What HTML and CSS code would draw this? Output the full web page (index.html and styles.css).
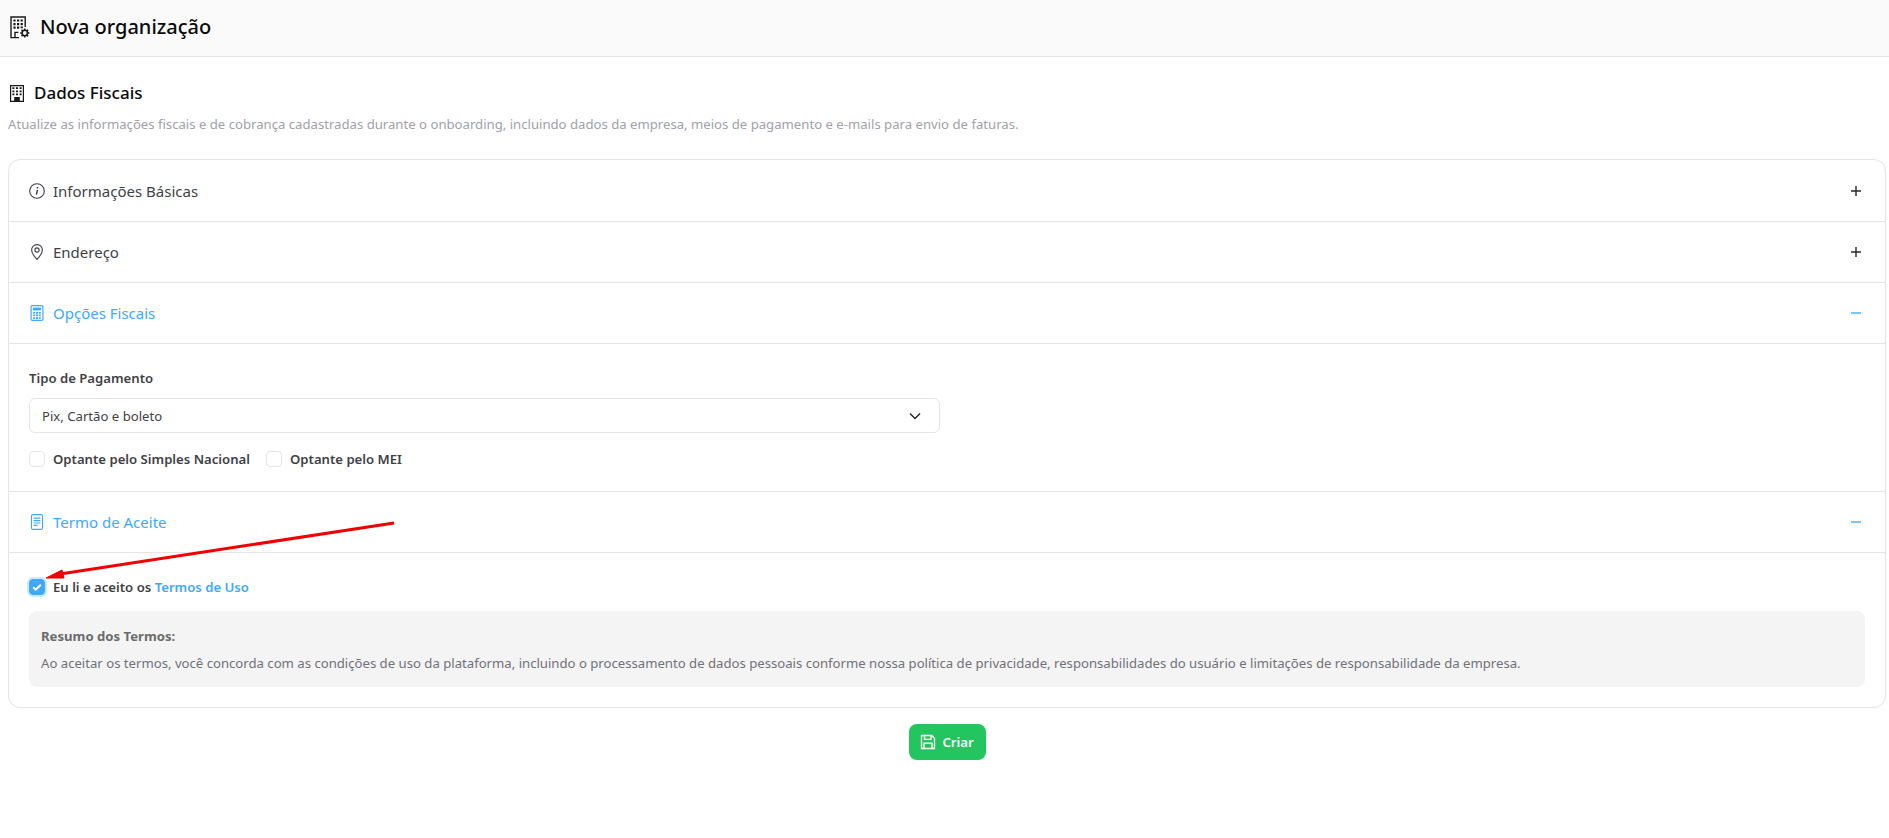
FILE: index.html
```html
<!DOCTYPE html>
<html lang="pt-BR">
<head>
<meta charset="utf-8">
<title>Nova organização</title>
<link rel="stylesheet" href="styles.css">
</head>
<body>
<header class="topbar">
  <svg class="top-icon" viewBox="0 0 20 23" fill="none" stroke="currentColor" stroke-width="1.4"><path d="M9 21.6H1V1h14.2v10"/><path fill="currentColor" stroke="none" d="M3.4 3.4h2.2v2.2H3.4zM7 3.4h2.2v2.2H7zM10.6 3.4h2.2v2.2h-2.2zM3.4 7h2.2v2.2H3.4zM7 7h2.2v2.2H7zM10.6 7h2.2v2.2h-2.2zM3.4 10.6h2.2v2.2H3.4zM7 10.6h2.2v2.2H7zM10.6 10.6h2.2v1.6h-2.2z"/><path d="M5 21.6v-5.2h3.4" /><circle cx="14.8" cy="17" r="2.7" stroke-width="1.6"/><path d="M14.8 12.4v1.6M14.8 20v1.6M10.2 17h1.6M17.8 17h1.6M11.5 13.7l1.2 1.2M16.9 19.1l1.2 1.2M11.5 20.3l1.2-1.2M16.9 14.9l1.2-1.2" stroke-width="1.5"/></svg>
  <h1 class="top-title">Nova organização</h1>
</header>
<main class="page">
  <div class="section-head">
    <svg class="section-icon" viewBox="0 0 14 17"><path fill="none" stroke="currentColor" stroke-width="1.2" d="M.6.6h12.8v15.8H.6z"/><path fill="currentColor" d="M2.4 2.3h2v1.8h-2zM6 2.3h2v1.8H6zM9.6 2.3h2v1.8h-2zM2.4 5.4h2v1.8h-2zM6 5.4h2v1.8H6zM9.6 5.4h2v1.8h-2zM2.4 8.5h2v1.8h-2zM6 8.5h2v1.8H6zM9.6 8.5h2v1.8h-2zM4.2 12h5.6v5H4.2z"/></svg>
    <h2 class="section-title">Dados Fiscais</h2>
  </div>
  <p class="section-desc">Atualize as informações fiscais e de cobrança cadastradas durante o onboarding, incluindo dados da empresa, meios de pagamento e e-mails para envio de faturas.</p>

  <section class="accordion">
    <div class="acc-row acc-first">
      <svg class="acc-icon" viewBox="0 0 16 16" fill="none" stroke="currentColor" stroke-width="1.1"><circle cx="8" cy="8" r="7.3"/><path d="M8.5 6.8l-1.1 4.8M8.5 4v1.5" stroke-width="1.5"/></svg>
      <span class="acc-label">Informações Básicas</span>
      <svg class="acc-toggle" viewBox="0 0 10 10" stroke="currentColor" stroke-width="1.4"><path d="M0 5h10M5 0v10"/></svg>
    </div>
    <div class="acc-row">
      <svg class="acc-icon" viewBox="0 0 16 16" fill="none" stroke="currentColor" stroke-width="1.1"><path d="M8 15.5C5.5 12.4 2.6 9.6 2.6 6a5.4 5.4 0 0 1 10.8 0c0 3.6-2.9 6.4-5.4 9.5z"/><circle cx="8" cy="6" r="2.1"/></svg>
      <span class="acc-label">Endereço</span>
      <svg class="acc-toggle" viewBox="0 0 10 10" stroke="currentColor" stroke-width="1.4"><path d="M0 5h10M5 0v10"/></svg>
    </div>
    <div class="acc-row acc-open">
      <svg class="acc-icon" viewBox="0 0 16 16" fill="none" stroke="currentColor" stroke-width="1.2"><rect x="2.1" y=".6" width="11.8" height="14.8" rx="1.2"/><path d="M4 2.6h8v2.8H4z" fill="currentColor" stroke="none"/><path d="M4.2 7h2v1.7h-2zM7 7h2v1.7H7zM9.8 7h2v1.7h-2zM4.2 9.6h2v1.7h-2zM7 9.6h2v1.7H7zM9.8 9.6h2v1.7h-2zM4.2 12.2h2v1.7h-2zM7 12.2h2v1.7H7zM9.8 12.2h2v1.7h-2z" fill="currentColor" stroke="none"/></svg>
      <span class="acc-label">Opções Fiscais</span>
      <svg class="acc-toggle acc-minus" viewBox="0 0 10 10" stroke="currentColor" stroke-width="2"><path d="M0 5h10"/></svg>
    </div>
    <div class="acc-body fiscal">
      <div class="field-label">Tipo de Pagamento</div>
      <div class="select">
        <span>Pix, Cartão e boleto</span>
        <svg class="chevron" viewBox="0 0 12 8" fill="none" stroke="currentColor" stroke-width="1.5"><path d="M1 1.5l5 5 5-5"/></svg>
      </div>
      <div class="check-row">
        <label class="check"><span class="box"></span><span>Optante pelo Simples Nacional</span></label>
        <label class="check"><span class="box"></span><span>Optante pelo MEI</span></label>
      </div>
    </div>
    <div class="acc-row acc-open">
      <svg class="acc-icon" viewBox="0 0 16 16" fill="none" stroke="currentColor" stroke-width="1.1"><rect x="2.5" y=".6" width="11" height="14.8" rx="1.4"/><path d="M4.6 4.2h6.8M4.6 6.6h6.8M4.6 9h6.8M4.6 11.4h4" stroke-width="1.2"/></svg>
      <span class="acc-label">Termo de Aceite</span>
      <svg class="acc-toggle acc-minus" viewBox="0 0 10 10" stroke="currentColor" stroke-width="2"><path d="M0 5h10"/></svg>
    </div>
    <div class="acc-body terms">
      <label class="check accept">
        <span class="box box-on"><svg viewBox="0 0 12 12" fill="none" stroke="#fff" stroke-width="2"><path d="M2.2 6.3l2.6 2.4 5-5"/></svg></span>
        <span>Eu li e aceito os <a class="terms-link">Termos de Uso</a></span>
      </label>
      <div class="summary">
        <div class="summary-title">Resumo dos Termos:</div>
        <p class="summary-text">Ao aceitar os termos, você concorda com as condições de uso da plataforma, incluindo o processamento de dados pessoais conforme nossa política de privacidade, responsabilidades do usuário e limitações de responsabilidade da empresa.</p>
      </div>
    </div>
  </section>

  <div class="actions">
    <button class="btn-create">
      <svg viewBox="0 0 16 16" fill="none" stroke="currentColor" stroke-width="1.3"><path d="M1.5 1.5h10.3l2.7 2.7v10.3h-13z"/><path d="M4.5 1.5v3.8h6.5V1.5M4 14.5V9.2h8v5.3"/></svg>
      <span>Criar</span>
    </button>
  </div>
</main>
<svg class="annotation" viewBox="0 0 1889 838" fill="none">
  <path d="M394 523L60 574" stroke="#f00000" stroke-width="3"/>
  <path d="M46 578L62 570L64 578z" fill="#f00000" stroke="#f00000"/>
</svg>
</body>
</html>
```
FILE: styles.css
```css
* { box-sizing: border-box; }
html, body { margin: 0; padding: 0; }
body {
  background: #fff;
  color: #27272a;
  font-family: "Noto Sans", "Open Sans", sans-serif;
  font-size: 14px;
  height: 838px;
  overflow: hidden;
  position: relative;
}
.topbar {
  height: 57px;
  background: #fafafa;
  border-bottom: 1px solid #e5e5e5;
  display: flex;
  align-items: center;
  padding: 0 9px 2px 10px;
  gap: 10px;
}
.top-icon { width: 20px; height: 23px; color: #18181b; flex: none; }
.top-title { margin: 0; font-size: 20px; font-weight: 500; color: #09090b; line-height: 28px; }
.page { padding: 23px 3px 0 8px; }
.section-head { display: flex; align-items: center; gap: 10px; height: 26px; padding-left: 2px; }
.section-icon { width: 14px; height: 17px; color: #18181b; flex: none; }
.section-title { margin: 0; font-size: 17px; font-weight: 500; color: #09090b; line-height: 26px; }
.section-desc { margin: 8px 0 0; font-size: 13.15px; line-height: 20px; color: #a1a1aa; height: 20px; }
.accordion {
  margin-top: 25px;
  border: 1px solid #e5e5e5;
  border-radius: 12px;
  height: 549px;
}
.acc-row {
  height: 61px;
  display: flex;
  align-items: center;
  padding: 0 24px 0 20px;
  border-bottom: 1px solid #e5e5e5;
  color: #3f3f46;
}
.acc-first { height: 62px; }
.acc-icon { width: 16px; height: 16px; flex: none; }
.acc-label { margin-left: 8px; font-size: 15px; flex: 1; }
.acc-toggle { width: 10px; height: 10px; flex: none; color: #27272a; }
.acc-open { color: #40a9ff; }
.acc-minus { color: #7cc4fb; }
.acc-body { padding: 0 20px; }
.fiscal { height: 148px; border-bottom: 1px solid #e5e5e5; padding-top: 25px; }
.field-label { font-size: 13.15px; font-weight: 600; color: #3f3f46; line-height: 18px; }
.select {
  margin-top: 11px;
  width: 911px;
  height: 35px;
  border: 1px solid #e5e5e5;
  border-radius: 6px;
  display: flex;
  align-items: center;
  justify-content: space-between;
  padding: 0 18px 0 12px;
  font-size: 13.15px;
  color: #3f3f46;
}
.chevron { width: 12px; height: 8px; color: #27272a; }
.check-row { display: flex; gap: 16px; margin-top: 17px; }
.check { display: flex; align-items: center; gap: 8px; font-size: 13.15px; font-weight: 600; color: #3f3f46; line-height: 18px; }
.box { width: 16px; height: 16px; border: 1px solid #e5e5e5; border-radius: 4px; flex: none; background: #fff; display: flex; align-items: center; justify-content: center; }
.box-on { background: #40a9ff; border-color: #40a9ff; box-shadow: 0 0 0 2px #cfe9ff; }
.box-on svg { width: 12px; height: 12px; }
.terms { padding-top: 25px; }
.terms-link { color: #40a9ff; }
.summary { margin-top: 15px; height: 76px; background: #f4f4f4; border-radius: 8px; padding: 15px 12px 0; color: #71717a; }
.summary-title { font-size: 13.15px; font-weight: 700; line-height: 20px; color: #6b6b6b; }
.summary-text { margin: 7px 0 0; font-size: 13.15px; line-height: 20px; color: #71717a; }
.actions { display: flex; justify-content: center; margin-top: 16px; }
.btn-create {
  width: 77px;
  height: 36px;
  border: 0;
  border-radius: 8px;
  background: #22c55e;
  color: #fff;
  display: flex;
  align-items: center;
  justify-content: center;
  gap: 6px;
  font: 600 13.15px "Noto Sans", sans-serif;
  padding: 0;
}
.btn-create svg { width: 16px; height: 16px; }
.annotation { position: absolute; left: 0; top: 0; width: 1889px; height: 838px; pointer-events: none; }
```
